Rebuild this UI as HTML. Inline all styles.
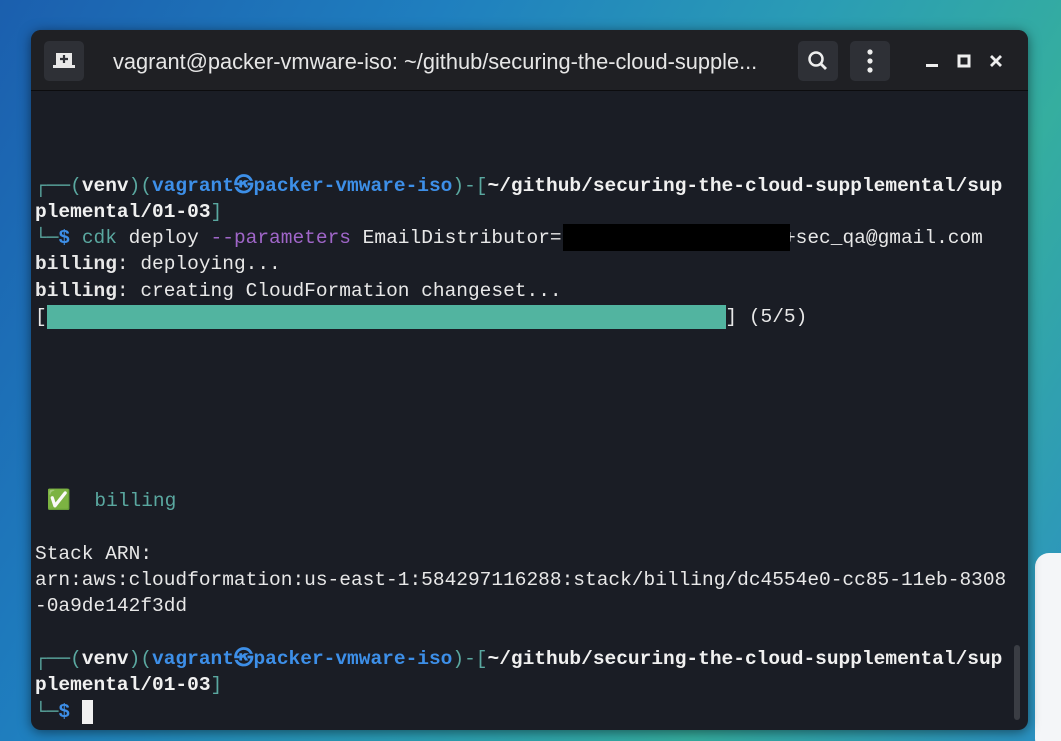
<!DOCTYPE html>
<html><head><meta charset="utf-8"><style>
*{margin:0;padding:0;box-sizing:border-box}
html,body{width:1061px;height:741px;overflow:hidden}
body{position:relative;
background:linear-gradient(120deg,#1b5fae 0%,#1f7fbf 30%,#2a9cb5 55%,#35ae9f 75%,#2a8fc4 100%);
font-family:"Liberation Mono",monospace}
.win{position:absolute;left:31px;top:30px;width:997px;height:700px;background:#1a1d25;border-radius:10px;overflow:hidden;box-shadow:0 2px 12px rgba(0,0,0,.5)}
.tb{position:absolute;left:0;top:0;width:997px;height:61px;background:#1f2024;border-bottom:1px solid #0c0c0e}
.btn{position:absolute;top:11px;width:40px;height:40px;background:#2e3036;border-radius:5px}
.title{position:absolute;left:82px;top:19px;font-family:"Liberation Sans",sans-serif;font-size:21.8px;color:#e6e6e6;white-space:nowrap}
.l{position:absolute;left:4px;font-size:19.5px;letter-spacing:0px;line-height:26.25px;height:26.25px;white-space:pre;color:#e8e8e8}
b{font-weight:bold}
.g{color:#5aa8a0}.bl{color:#3d8fe8}.p{color:#a066c9}.w{color:#f0f0f0}
.sb{position:absolute;left:983px;top:615px;width:6px;height:75px;background:#3a3d44;border-radius:3px}
</style></head><body>
<div style="position:absolute;left:1035px;top:553px;width:40px;height:200px;background:#f4f6f8;border-radius:14px"></div>
<div class="win">
<div class="tb">
 <div class="btn" style="left:13px"><svg width="40" height="40"><rect x="12" y="12" width="16" height="13" fill="#e8e8e8"/><rect x="9" y="24" width="22" height="3" fill="#e8e8e8"/><path d="M20 14v8M16 18h8" stroke="#2e3036" stroke-width="2.2"/></svg></div>
 <div class="title">vagrant@packer-vmware-iso: ~/github/securing-the-cloud-supple...</div>
 <div class="btn" style="left:767px"><svg width="40" height="40"><circle cx="18" cy="18" r="6.5" stroke="#eee" stroke-width="2.5" fill="none"/><path d="M23 23l5 5" stroke="#eee" stroke-width="2.8"/></svg></div>
 <div class="btn" style="left:819px"><svg width="40" height="40"><circle cx="20" cy="11" r="2.6" fill="#eee"/><circle cx="20" cy="20" r="2.6" fill="#eee"/><circle cx="20" cy="29" r="2.6" fill="#eee"/></svg></div>
 <svg style="position:absolute;left:890px;top:20px" width="90" height="24"><rect x="5" y="14" width="12" height="3" fill="#eee"/><rect x="38" y="6" width="10" height="10" stroke="#eee" stroke-width="3" fill="none"/><path d="M70 6l10 10M80 6l-10 10" stroke="#eee" stroke-width="2.8"/></svg>
</div>
<div class="l" style="top:143px"><span class="g">┌──(</span><b class="w">venv</b><span class="g">)(</span><b class="bl">vagrant㉿packer-vmware-iso</b><span class="g">)-[</span><b class="w">~/github/securing-the-cloud-supplemental/sup</b></div>
<div class="l" style="top:169px"><b class="w">plemental/01-03</b><span class="g">]</span></div>
<div class="l" style="top:195px"><span class="g">└─</span><b class="bl">$</b> <span class="g">cdk</span> deploy <span class="p">--parameters</span> EmailDistributor=                   +sec_qa@gmail.com</div>
<div style="position:absolute;left:532px;top:194px;width:227px;height:27px;background:#000"></div>
<div class="l" style="top:221px"><b>billing</b>: deploying...</div>
<div class="l" style="top:248px"><b>billing</b>: creating CloudFormation changeset...</div>
<div class="l" style="top:274px">[                                                          ] (5/5)</div>
<div style="position:absolute;left:16px;top:275px;width:679px;height:24px;background:#52b4a0"></div>
<div class="l" style="top:458px"> <span style="color:#3ec43e">✅</span>  <span class="g">billing</span></div>
<div class="l" style="top:511px">Stack ARN:</div>
<div class="l" style="top:537px">arn:aws:cloudformation:us-east-1:584297116288:stack/billing/dc4554e0-cc85-11eb-8308</div>
<div class="l" style="top:563px">-0a9de142f3dd</div>
<div class="l" style="top:616px"><span class="g">┌──(</span><b class="w">venv</b><span class="g">)(</span><b class="bl">vagrant㉿packer-vmware-iso</b><span class="g">)-[</span><b class="w">~/github/securing-the-cloud-supplemental/sup</b></div>
<div class="l" style="top:642px"><b class="w">plemental/01-03</b><span class="g">]</span></div>
<div class="l" style="top:669px"><span class="g">└─</span><b class="bl">$</b> </div>
<div style="position:absolute;left:51px;top:670px;width:11px;height:24px;background:#f0f0f0"></div>
<div class="sb"></div>
</div>
</body></html>
